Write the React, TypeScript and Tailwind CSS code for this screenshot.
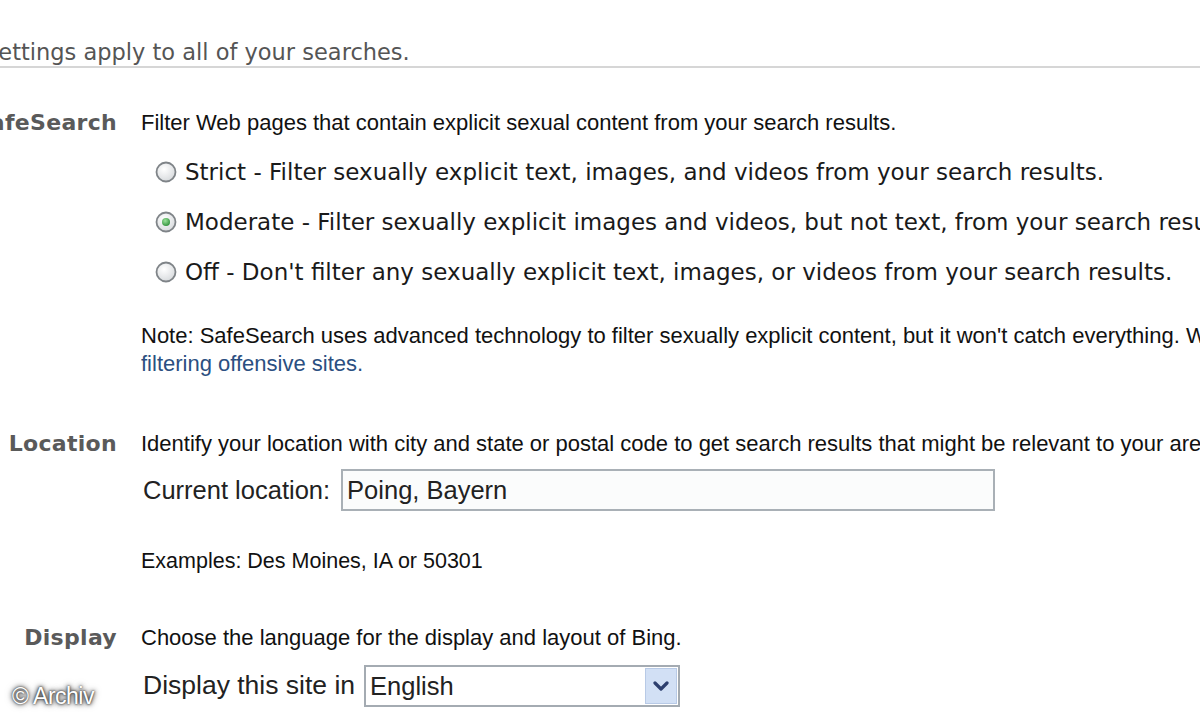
import React from "react";

const verdana = { fontFamily: '"DejaVu Sans", Verdana, sans-serif' };

function Radio({ checked }: { checked?: boolean }) {
  return (
    <svg width="22" height="22" viewBox="0 0 22 22" className="shrink-0">
      <defs>
        <radialGradient id={checked ? "rg1" : "rg0"} cx="40%" cy="35%" r="70%">
          <stop offset="0%" stopColor="#ffffff" />
          <stop offset="100%" stopColor="#d6d9dc" />
        </radialGradient>
        <radialGradient id="dot" cx="40%" cy="35%" r="70%">
          <stop offset="0%" stopColor="#9be39b" />
          <stop offset="100%" stopColor="#2f8f3a" />
        </radialGradient>
      </defs>
      <circle cx="11" cy="11" r="9.5" fill={`url(#${checked ? "rg1" : "rg0"})`} stroke="#7f8488" strokeWidth="1.8" />
      {checked && <circle cx="11" cy="11" r="4" fill="url(#dot)" />}
    </svg>
  );
}

function Label({ children }: { children: React.ReactNode }) {
  return (
    <div className="w-[117px] shrink-0 flex justify-end">
      <span
        className="whitespace-nowrap text-[22px] leading-[30px] font-bold text-[#5a5a5a] tracking-[0.3px]"
        style={verdana}
      >
        {children}
      </span>
    </div>
  );
}

export default function App() {
  return (
    <div
      className="relative w-[1200px] h-[720px] overflow-hidden bg-white text-[#111]"
      style={{ fontFamily: '"Liberation Sans", Arial, sans-serif' }}
    >
      {/* header */}
      <div className="mt-[37px] h-[31px] border-b-2 border-[#d6d6d6]">
        <div
          className="ml-[-16px] whitespace-nowrap text-[22.5px] leading-[30px] text-[#555]"
          style={verdana}
        >
          Settings apply to all of your searches.
        </div>
      </div>

      {/* SafeSearch */}
      <div className="mt-[40px] flex">
        <Label>SafeSearch</Label>
        <div className="ml-[24px] whitespace-nowrap">
          <div className="text-[22px] leading-[30px]">
            Filter Web pages that contain explicit sexual content from your search results.
          </div>
          <div className="mt-[9px] ml-[14px] text-[23px] text-[#1a1a1a]" style={verdana}>
            <div className="h-[50px] flex items-center gap-[8px]">
              <Radio />
              <span>Strict - Filter sexually explicit text, images, and videos from your search results.</span>
            </div>
            <div className="h-[50px] flex items-center gap-[8px]">
              <Radio checked />
              <span>Moderate - Filter sexually explicit images and videos, but not text, from your search results.</span>
            </div>
            <div className="h-[50px] flex items-center gap-[8px]">
              <Radio />
              <span>Off - Don't filter any sexually explicit text, images, or videos from your search results.</span>
            </div>
          </div>
          <div className="mt-[25px] text-[22px] leading-[28px]">
            <div>
              Note: SafeSearch uses advanced technology to filter sexually explicit content, but it won't catch everything. We recommend
            </div>
            <div className="text-[#2b4f81]">filtering offensive sites.</div>
          </div>
        </div>
      </div>

      {/* Location */}
      <div className="mt-[51px] flex">
        <Label>Location</Label>
        <div className="ml-[24px] whitespace-nowrap">
          <div className="text-[22px] leading-[30px]">
            Identify your location with city and state or postal code to get search results that might be relevant to your area.
          </div>
          <div className="mt-[10px] h-[42px] flex items-center">
            <span className="ml-[2px] text-[25.5px] text-[#222]">Current location:</span>
            <div className="ml-[11px] w-[654px] h-[42px] border-2 border-[#a9b0b6] bg-[#fbfcfc] flex items-center px-[4px] text-[25.5px] text-[#222]">
              Poing, Bayern
            </div>
          </div>
          <div className="mt-[36px] text-[21.5px] leading-[28px]">Examples: Des Moines, IA or 50301</div>
        </div>
      </div>

      {/* Display */}
      <div className="mt-[48px] flex">
        <Label>Display</Label>
        <div className="ml-[24px] whitespace-nowrap">
          <div className="text-[22px] leading-[30px]">
            Choose the language for the display and layout of Bing.
          </div>
          <div className="mt-[12px] h-[42px] flex items-center">
            <span className="ml-[2px] text-[26.5px] text-[#222]">Display this site in</span>
            <div className="ml-[9px] w-[316px] h-[42px] border-2 border-[#a4abb2] bg-white flex items-center text-[25.5px] text-[#222]">
              <span className="flex-1 pl-[4px]">English</span>
              <div className="mr-[1px] w-[32px] h-[36px] bg-[#d2e0f5] border border-[#b8cae6] flex items-center justify-center">
                <svg width="16" height="12" viewBox="0 0 16 12">
                  <path d="M2 3 L8 9 L14 3" fill="none" stroke="#2d3f6e" strokeWidth="3.2" strokeLinecap="round" strokeLinejoin="round" />
                </svg>
              </div>
            </div>
          </div>
        </div>
      </div>

      {/* watermark */}
      <div
        className="absolute left-[12px] top-[682px] text-[23px] leading-[28px] text-white whitespace-nowrap tracking-[-0.5px] [text-shadow:0_0_2px_#222,0_0_4px_#333,0_0_7px_#666]"
        style={{ fontFamily: '"Liberation Sans", Arial, sans-serif' }}
      >
        © Archiv
      </div>
    </div>
  );
}
